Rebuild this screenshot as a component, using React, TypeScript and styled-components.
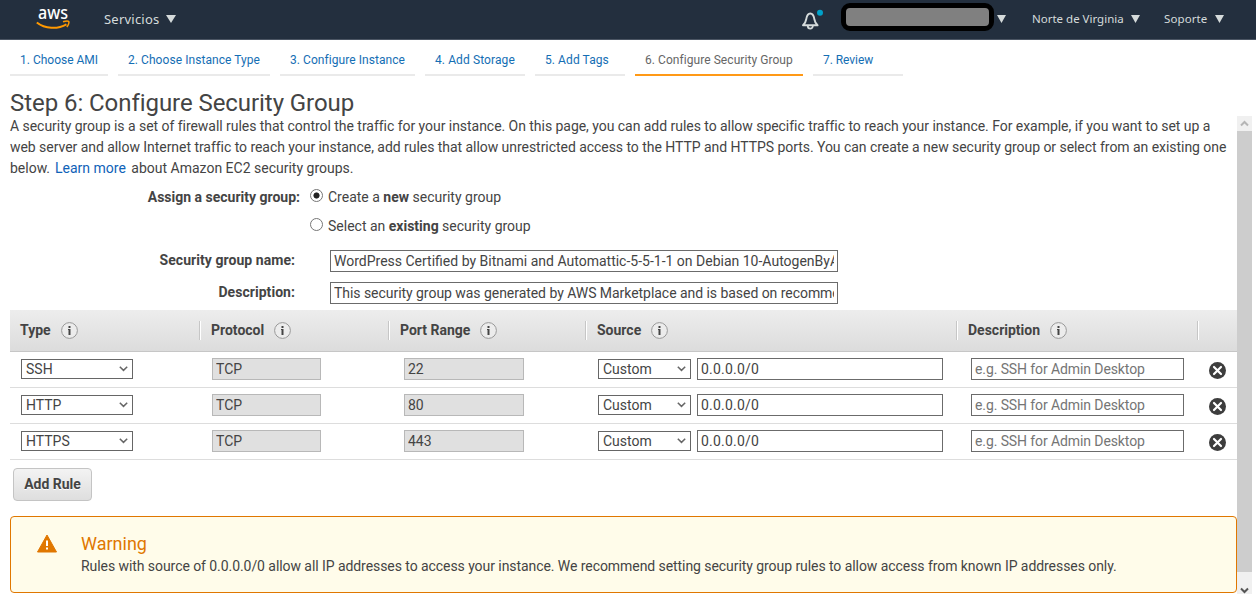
import React from "react";
import styled, { createGlobalStyle } from "styled-components";

const GlobalStyle = createGlobalStyle`
  *, *::before, *::after { box-sizing: border-box; }
  html, body { margin: 0; height: 594px; overflow: hidden; background: #fff; }
  body { font-family: Roboto, "Liberation Sans", sans-serif; font-size: 14px; color: #444; }
  input, select, button { font-family: inherit; font-size: 14px; color: #444; margin: 0; border-radius: 0; outline: 0; }
`;

const Page = styled.div`
  width: 1256px;
  height: 594px;
  display: flex;
  flex-direction: column;
  overflow: hidden;
`;

const NavBar = styled.header`
  flex: none;
  height: 40px;
  display: flex;
  align-items: center;
  background: #232f3e;
  border-bottom: 1px solid #4b5563;
  color: #d5dbdb;
  font-family: "Noto Sans", "Open Sans", sans-serif;
  padding: 0 32px 2px 0;
`;

const Logo = styled.svg`
  margin: 0 32px 0 35px;
  overflow: visible;
`;

const NavItem = styled.div<{ $size: number; $spacing?: number; $width: number; $ml?: number }>`
  display: flex;
  align-items: center;
  justify-content: space-between;
  width: ${(p) => p.$width}px;
  margin-left: ${(p) => p.$ml ?? 0}px;
  font-size: ${(p) => p.$size}px;
  letter-spacing: ${(p) => p.$spacing ?? 0}px;
  white-space: nowrap;
`;

const Bell = styled.svg`
  margin-left: auto;
  margin-top: 4px;
  overflow: visible;
`;

const Account = styled.div`
  width: 153px;
  height: 28px;
  margin: -3px 3px 0 20px;
  border: 5px solid #000;
  border-radius: 9px;
  background: #808080;
`;

const Tabs = styled.nav`
  flex: none;
  height: 50px;
  padding: 4px 10px 0;
  display: flex;
  gap: 10px;
`;

const Tab = styled.a<{ $width: number; $active?: boolean; $spacing?: number }>`
  width: ${(p) => p.$width}px;
  height: 32px;
  padding-left: 10px;
  line-height: 32px;
  font-size: 12px;
  letter-spacing: ${(p) => p.$spacing ?? 0}px;
  white-space: nowrap;
  color: ${(p) => (p.$active ? "#666" : "#146eb4")};
  border-bottom: 2px solid ${(p) => (p.$active ? "#ff9916" : "#eaeaea")};
`;

const Title = styled.h1`
  flex: none;
  height: 26px;
  margin: 0;
  padding-left: 10px;
  line-height: 26px;
  font-size: 24px;
  font-weight: 400;
  letter-spacing: -0.06px;
`;

const Content = styled.div`
  flex: 1;
  min-height: 0;
  display: flex;
`;

const Panel = styled.main`
  width: 1237px;
  padding-left: 10px;
  overflow: hidden;
`;

const Intro = styled.p`
  margin: 0;
  line-height: 21px;
`;

const Line = styled.span<{ $spacing?: number }>`
  display: block;
  white-space: pre;
  letter-spacing: ${(p) => p.$spacing ?? 0}px;
`;

const Link = styled.a`
  color: #0f62b8;
  margin: 0 2px 0 1.5px;
`;

const FormRow = styled.div<{ $height: number; $mt?: number; $mb?: number }>`
  height: ${(p) => p.$height}px;
  margin: ${(p) => p.$mt ?? 0}px 0 ${(p) => p.$mb ?? 0}px;
  display: flex;
  align-items: center;
`;

const FieldLabel = styled.div<{ $width: number; $gap: number; $spacing?: number; $raised?: boolean }>`
  width: ${(p) => p.$width}px;
  margin-right: ${(p) => p.$gap}px;
  padding-bottom: ${(p) => (p.$raised ? 3 : 0)}px;
  text-align: right;
  font-weight: 700;
  letter-spacing: ${(p) => p.$spacing ?? 0}px;
`;

const RadioMark = styled.span<{ $on?: boolean }>`
  width: 13px;
  height: 13px;
  margin: -2px 5px 0 0;
  border: 1px solid #767676;
  border-radius: 50%;
  background: ${(p) => (p.$on ? "radial-gradient(circle, #222 2.7px, #fff 3.4px)" : "#fff")};
`;

const Box = styled.input<{ $width: number; $spacing?: number }>`
  width: ${(p) => p.$width}px;
  height: 22px;
  padding: 0 3px;
  border: 1px solid #6b6b6b;
  background: #fff;
  letter-spacing: ${(p) => p.$spacing ?? 0}px;
  &::placeholder { color: #757575; opacity: 1; }
  &:disabled { background: #e0e0e0; border-color: #b8b8b8; color: #444; }
`;

const SelectWrap = styled.div<{ $width: number }>`
  width: ${(p) => p.$width}px;
  height: 20px;
  display: flex;
  align-items: center;
  justify-content: space-between;
  padding: 0 4px;
  border: 1px solid #666;
  background: #fff;
`;

const columns = "191px 189px 197px 371px 241px 38px";

const TableHead = styled.div`
  height: 42px;
  display: grid;
  grid-template-columns: ${columns};
  align-items: center;
  background: linear-gradient(#ededed, #dcdcdc);
  border-bottom: 1px solid #c6c6c6;
`;

const HeadCell = styled.div`
  height: 19px;
  display: flex;
  align-items: center;
  padding: 0 0 2px 10px;
  font-weight: 700;
  border-right: 1px solid #fff;
  box-shadow: inset -1px 0 #c6c6c6;
  &:last-child { border: 0; box-shadow: none; }
`;

const InfoIcon = styled.svg`
  margin: 2px 0 0 10px;
`;

const TableRow = styled.div`
  height: 36px;
  display: grid;
  grid-template-columns: ${columns};
  align-items: center;
  padding-bottom: 1px;
  border-bottom: 1px solid #ddd;
`;

const Cell = styled.div<{ $left: number }>`
  display: flex;
  align-items: center;
  gap: 6px;
  padding-left: ${(p) => p.$left}px;
`;

const AddButton = styled.button`
  display: block;
  width: 79px;
  height: 33px;
  margin: 8px 0 15px 3px;
  padding: 0 0 2px;
  border: 1px solid #c4c4c4;
  border-radius: 4px;
  background: linear-gradient(#f3f3f3, #dedede);
  font-weight: 700;
  text-shadow: 0 1px #fff;
`;

const Alert = styled.section`
  width: 1227px;
  height: 77px;
  display: flex;
  padding: 17px 0 0 26px;
  border: 1px solid #e07700;
  border-radius: 4px;
  background: #fffcea;
`;

const AlertBody = styled.div`
  margin-left: 24px;
`;

const AlertTitle = styled.h2`
  margin: 0;
  font-size: 18px;
  font-weight: 400;
  line-height: 20px;
  color: #e07700;
`;

const AlertText = styled.p`
  margin: 2px 0 0;
  line-height: 21px;
  letter-spacing: -0.064px;
  white-space: nowrap;
`;

const ScrollBar = styled.div`
  width: 15px;
  display: flex;
  flex-direction: column;
  background: #f0f0f0;
`;

const ScrollArrow = styled.div<{ $top?: boolean }>`
  height: ${(p) => (p.$top ? 15 : 22)}px;
  display: flex;
  align-items: ${(p) => (p.$top ? "center" : "flex-end")};
  justify-content: center;
`;

const ScrollThumb = styled.div`
  height: 441px;
  background: #cdcdcd;
`;

const Caret = ({ w = 10, h = 8 }: { w?: number; h?: number }) => (
  <svg width={w} height={h} viewBox="0 0 10 8" preserveAspectRatio="none">
    <path d="M0 0h10L5 8z" fill="#d5dbdb" />
  </svg>
);

const Info = () => (
  <InfoIcon width="17" height="17" viewBox="0 0 17 17">
    <circle cx="8.5" cy="8.5" r="7.9" fill="#ececec" stroke="#999" />
    <path d="M7.5 4h2v2h-2zM7 7h2.500v6h-2V8H7z" fill="#444" />
  </InfoIcon>
);

const Remove = () => (
  <svg width="17" height="17" viewBox="0 0 17 17">
    <circle cx="8.5" cy="8.5" r="8.5" fill="#3d3d3d" />
    <path d="M5 5l7 7M12 5l-7 7" stroke="#fff" strokeWidth="2.2" strokeLinecap="round" />
  </svg>
);

const RemoveButton = styled.span`
  display: flex;
  padding-top: 3px;
`;

const Select = ({ value, width }: { value: string; width: number }) => (
  <SelectWrap $width={width}>
    <span>{value}</span>
    <svg width="9" height="6" viewBox="0 0 9 6">
      <path d="M.8 .8l3.700 3.600L8.200 .8" fill="none" stroke="#666" strokeWidth="1.500" />
    </svg>
  </SelectWrap>
);

const tabs = [
  { label: "1. Choose AMI", width: 98 },
  { label: "2. Choose Instance Type", width: 152, spacing: 0.06 },
  { label: "3. Configure Instance", width: 135, spacing: 0.06 },
  { label: "4. Add Storage", width: 100, spacing: 0.1 },
  { label: "5. Add Tags", width: 90, spacing: 0.08 },
  { label: "6. Configure Security Group", width: 168, spacing: 0.06, active: true },
  { label: "7. Review", width: 90, spacing: -0.05 },
];

const rules = [
  { type: "SSH", port: "22" },
  { type: "HTTP", port: "80" },
  { type: "HTTPS", port: "443" },
];

export default function App() {
  return (
    <Page>
      <GlobalStyle />
      <NavBar>
        <Logo width="37" height="24" viewBox="0 0 37 24">
          <text x="3" y="12" fontSize="18" fontWeight="500" fill="#fff" textLength="30" lengthAdjust="spacingAndGlyphs">aws</text>
          <path d="M1.800 15.500C10 22 22.500 22.500 31.500 17.300" fill="none" stroke="#f90" strokeWidth="2" />
          <path d="M28 14.800c3-1 5.200-.9 5.800-.2.500 1-.4 3.800-2 5.400" fill="none" stroke="#f90" strokeWidth="1.500" />
        </Logo>
        <NavItem $size={13} $width={72} $spacing={0.22}>
          Servicios <Caret />
        </NavItem>
        <Bell width="20" height="18" viewBox="0 0 20 18">
          <path d="M2 13.300c2.700-2.300 2.800-3.600 3.300-6.500C5.900 3.300 7.300 1.500 9.300 1.500s3.400 1.800 4 5.300c.5 2.900.6 4.200 3.300 6.500z" fill="none" stroke="#d5dbdb" strokeWidth="1.900" strokeLinejoin="round" />
          <path d="M6.800 14a2.500 2.600 0 0 0 5 0" fill="none" stroke="#d5dbdb" strokeWidth="1.800" />
          <circle cx="19" cy="0.800" r="3" fill="#00a1c9" />
        </Bell>
        <Account />
        <Caret w={9} />
        <NavItem $size={11.5} $width={108} $ml={26}>
          Norte de Virginia <Caret w={9} />
        </NavItem>
        <NavItem $size={11.5} $width={60} $ml={24} $spacing={0.1}>
          Soporte <Caret w={9} />
        </NavItem>
      </NavBar>
      <Tabs>
        {tabs.map((t) => (
          <Tab key={t.label} $width={t.width} $active={t.active} $spacing={t.spacing}>
            {t.label}
          </Tab>
        ))}
      </Tabs>
      <Title>Step 6: Configure Security Group</Title>
      <Content>
        <Panel>
          <Intro>
            <Line $spacing={-0.04}>A security group is a set of firewall rules that control the traffic for your instance. On this page, you can add rules to allow specific traffic to reach your instance. For example, if you want to set up a</Line>
            <Line $spacing={-0.045}>web server and allow Internet traffic to reach your instance, add rules that allow unrestricted access to the HTTP and HTTPS ports. You can create a new security group or select from an existing one</Line>
            <Line>below. <Link>Learn more</Link> about Amazon EC2 security groups.</Line>
          </Intro>
          <FormRow $height={35}>
            <FieldLabel $width={290} $gap={10}>Assign a security group:</FieldLabel>
            <RadioMark $on />
            <span>Create a <b>new</b> security group</span>
          </FormRow>
          <FormRow $height={23}>
            <FieldLabel $width={290} $gap={10} />
            <RadioMark />
            <span>Select an <b>existing</b> security group</span>
          </FormRow>
          <FormRow $height={32} $mt={8}>
            <FieldLabel $width={285} $gap={35} $spacing={0.05} $raised>Security group name:</FieldLabel>
            <Box $width={508} readOnly value="WordPress Certified by Bitnami and Automattic-5-5-1-1 on Debian 10-AutogenByAWSMP-" />
          </FormRow>
          <FormRow $height={32} $mb={1}>
            <FieldLabel $width={285} $gap={35} $spacing={0.05} $raised>Description:</FieldLabel>
            <Box $width={508} $spacing={-0.045} readOnly value="This security group was generated by AWS Marketplace and is based on recommended settings" />
          </FormRow>
          <TableHead>
            {["Type", "Protocol", "Port Range", "Source", "Description"].map((h) => (
              <HeadCell key={h}>
                {h}
                <Info />
              </HeadCell>
            ))}
            <HeadCell />
          </TableHead>
          {rules.map((r) => (
            <TableRow key={r.type}>
              <Cell $left={11}><Select value={r.type} width={112} /></Cell>
              <Cell $left={11}><Box $width={109} disabled value="TCP" /></Cell>
              <Cell $left={14}><Box $width={120} disabled value={r.port} /></Cell>
              <Cell $left={11}>
                <Select value="Custom" width={93} />
                <Box $width={246} $spacing={0.2} readOnly value="0.0.0.0/0" />
              </Cell>
              <Cell $left={13}><Box $width={213} $spacing={-0.1} readOnly placeholder="e.g. SSH for Admin Desktop" /></Cell>
              <Cell $left={10}><RemoveButton><Remove /></RemoveButton></Cell>
            </TableRow>
          ))}
          <AddButton>Add Rule</AddButton>
          <Alert>
            <svg width="20" height="19" viewBox="0 0 20 19">
              <path d="M10 1L19.500 18H.5z" fill="#e07700" stroke="#e07700" strokeLinejoin="round" />
              <path d="M9 6.500h2v5.500H9zM9 13.500h2v2H9z" fill="#fff" />
            </svg>
            <AlertBody>
              <AlertTitle>Warning</AlertTitle>
              <AlertText>Rules with source of 0.0.0.0/0 allow all IP addresses to access your instance. We recommend setting security group rules to allow access from known IP addresses only.</AlertText>
            </AlertBody>
          </Alert>
        </Panel>
        <ScrollBar>
          <ScrollArrow $top>
            <svg width="9" height="7" viewBox="0 0 9 7"><path d="M1 5.500l3.500-3.500L8 5.500" fill="none" stroke="#b5b5b5" strokeWidth="2" /></svg>
          </ScrollArrow>
          <ScrollThumb />
          <ScrollArrow>
            <svg width="9" height="7" viewBox="0 0 9 7"><path d="M1 1.500L4.500 5 8 1.500" fill="none" stroke="#555" strokeWidth="2" /></svg>
          </ScrollArrow>
        </ScrollBar>
      </Content>
    </Page>
  );
}
